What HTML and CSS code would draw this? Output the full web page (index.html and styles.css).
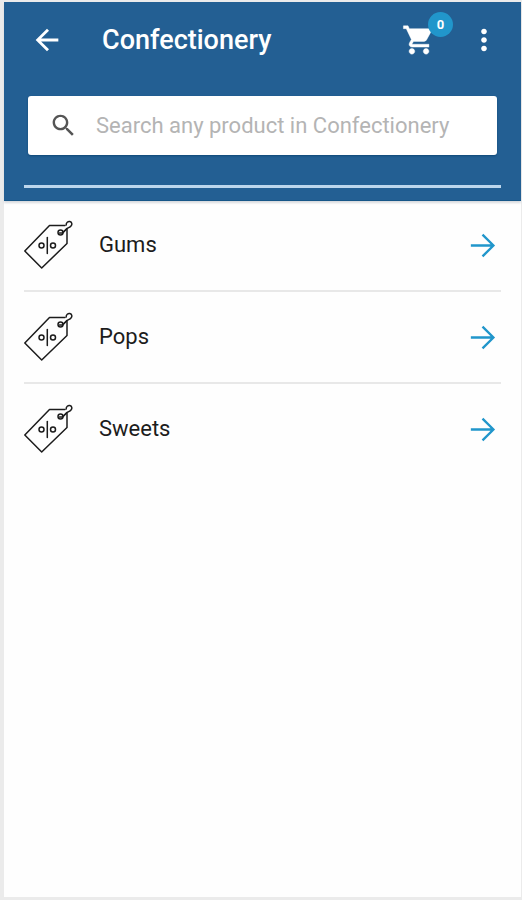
FILE: index.html
```html
<!DOCTYPE html>
<html lang="en">
<head>
<meta charset="utf-8">
<meta name="viewport" content="width=device-width, initial-scale=1">
<title>Confectionery</title>
<link rel="stylesheet" href="styles.css">
</head>
<body>
<svg class="sprite" aria-hidden="true">
  <symbol id="tag" viewBox="0 0 50 50">
    <g fill="none" stroke="#1c1c1c" stroke-width="1.5" stroke-linejoin="round" stroke-linecap="round">
      <path d="M41 5.500H25.500L.8 31L17.700 48L43 23.500V9.500"/>
      <circle cx="36.500" cy="12.500" r="2.500"/>
      <path d="M35.500 13H38.500L43 8.500"/>
      <path d="M42.200 5C42 2.500 44 1.200 45.800 1.500C48 2 48.500 4.500 47 6C46 7.200 44.500 7.500 43 8.500L39 12.500"/>
      <circle cx="17.500" cy="25.500" r="2.500"/>
      <circle cx="29" cy="25.500" r="2.500"/>
      <path d="M23.300 17.500V33.500"/>
    </g>
  </symbol>
  <symbol id="forward" viewBox="0 0 24 24">
    <path d="M4 12H19M12 4.500L19.500 12L12 19.500" fill="none" stroke="currentColor" stroke-width="1.600"/>
  </symbol>
</svg>
<div class="screen">
  <header class="header">
    <div class="bar">
      <button class="icon-button" type="button" aria-label="Back">
        <svg class="icon" viewBox="0 0 24 24"><path fill="currentColor" d="M20 11H7.830l5.590-5.590L12 4l-8 8 8 8 1.410-1.410L7.830 13H20v-2z"/></svg>
      </button>
      <h1 class="title">Confectionery</h1>
      <button class="icon-button cart" type="button" aria-label="Cart">
        <svg class="icon" viewBox="0 0 24 24"><path fill="currentColor" stroke="currentColor" stroke-width=".3" d="M7 18c-1.100 0-1.990.9-1.990 2S5.900 22 7 22s2-.9 2-2-.9-2-2-2zM1 2v2h2l3.600 7.590-1.350 2.450c-.16.28-.25.61-.25.960 0 1.100.9 2 2 2h12v-2H7.420c-.14 0-.25-.11-.25-.25l.03-.12.9-1.630h7.450c.75 0 1.410-.41 1.750-1.030l3.580-6.490c.08-.14.12-.31.12-.48 0-.55-.45-1-1-1H5.210l-.94-2H1zm16 16c-1.100 0-1.990.9-1.990 2s.89 2 1.990 2 2-.9 2-2-.9-2-2-2z"/></svg>
        <span class="badge">0</span>
      </button>
      <button class="icon-button" type="button" aria-label="More options">
        <svg class="icon" viewBox="0 0 24 24"><path fill="currentColor" d="M12 8c1.100 0 2-.9 2-2s-.9-2-2-2-2 .9-2 2 .9 2 2 2zm0 2c-1.100 0-2 .9-2 2s.9 2 2 2 2-.9 2-2-.9-2-2-2zm0 6c-1.100 0-2 .9-2 2s.9 2 2 2 2-.9 2-2-.9-2-2-2z"/></svg>
      </button>
    </div>
    <label class="search">
      <svg class="search-icon" viewBox="0 0 24 24" aria-hidden="true"><path fill="currentColor" d="M15.500 14h-.79l-.28-.27C15.410 12.590 16 11.110 16 9.500 16 5.910 13.090 3 9.500 3S3 5.910 3 9.500 5.910 16 9.500 16c1.610 0 3.090-.59 4.230-1.570l.27.28v.79l5 4.990L20.490 19l-4.990-5zm-6 0C7.010 14 5 11.990 5 9.500S7.010 5 9.500 5 14 7.010 14 9.500 11.990 14 9.500 14z"/></svg>
      <input class="search-input" type="search" placeholder="Search any product in Confectionery" aria-label="Search any product in Confectionery">
    </label>
    <hr class="rule">
  </header>
  <main>
    <ul class="list">
      <li class="item"><a class="row" href="#gums"><svg class="tag" aria-hidden="true"><use href="#tag"/></svg><span class="name">Gums</span><svg class="arrow" aria-hidden="true"><use href="#forward"/></svg></a></li>
      <li class="item"><a class="row" href="#pops"><svg class="tag" aria-hidden="true"><use href="#tag"/></svg><span class="name">Pops</span><svg class="arrow" aria-hidden="true"><use href="#forward"/></svg></a></li>
      <li class="item"><a class="row" href="#sweets"><svg class="tag" aria-hidden="true"><use href="#tag"/></svg><span class="name">Sweets</span><svg class="arrow" aria-hidden="true"><use href="#forward"/></svg></a></li>
    </ul>
  </main>
</div>
</body>
</html>
```
FILE: styles.css
```css
* {
  box-sizing: border-box;
}

body {
  margin: 0;
  font-family: Roboto, "Liberation Sans", sans-serif;
  background: #fefefe;
}

.sprite {
  display: none;
}

.screen {
  min-height: 100vh;
  border: solid #ebebeb;
  border-width: 2px 1px 3px 4px;
}

.header {
  padding: 14px 20px 12px;
  background: #235f93;
  box-shadow: 0 1px 0 #165688, 0 3px 2px #d8dade;
}

.bar {
  display: flex;
  align-items: center;
  height: 48px;
  padding: 0 0 0 6px;
  color: #fff;
}

.icon-button {
  position: relative;
  display: flex;
  padding: 0;
  border: 0;
  background: none;
  color: inherit;
}

.icon {
  width: 34px;
  height: 34px;
}

.title {
  flex: 1;
  margin: 0 0 0 38px;
  font-size: 27px;
  font-weight: 500;
  line-height: 32px;
}

.cart {
  margin-right: 31px;
}

.badge {
  position: absolute;
  top: -11px;
  right: -17px;
  width: 25px;
  height: 25px;
  border-radius: 50%;
  background: #2196cb;
  font: 700 13px/25px Roboto, sans-serif;
  text-align: center;
}

.search {
  display: flex;
  align-items: center;
  gap: 18px;
  height: 59px;
  margin: 32px 4px 30px;
  padding: 0 22px 0 21px;
  border-radius: 3px;
  background: #fff;
  box-shadow: 0 1px 2px #104878;
}

.search-icon {
  flex: none;
  width: 29px;
  height: 29px;
  color: #555;
}

.search-input {
  flex: 1;
  min-width: 0;
  padding: 0;
  border: 0;
  outline: 0;
  background: none;
  font: 22px/28px Roboto, sans-serif;
  color: #222;
}

.search-input::placeholder {
  color: #b4b4b4;
}

.rule {
  height: 3px;
  margin: 0;
  border: 0;
  background: #bcd6ec;
}

.list {
  margin: 0;
  padding: 0 20px;
  list-style: none;
}

.item + .item {
  border-top: 2px solid #e8e8e8;
}

.row {
  display: flex;
  align-items: center;
  height: 90px;
  padding-right: 1px;
  color: #1c1c1c;
  text-decoration: none;
}

.tag {
  width: 50px;
  height: 50px;
}

.name {
  flex: 1;
  margin-left: 25px;
  font-size: 22px;
  line-height: 28px;
}

.arrow {
  width: 35px;
  height: 35px;
  color: #2196cb;
}
```
